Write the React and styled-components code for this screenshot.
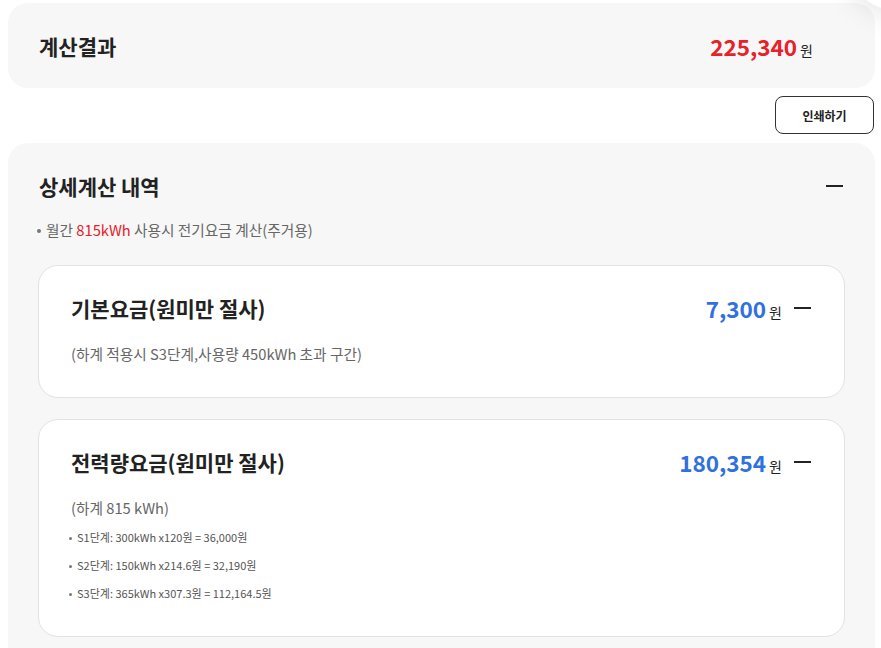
import React from 'react';
import styled, { createGlobalStyle } from 'styled-components';

const GlobalStyle = createGlobalStyle`
  body {
    margin: 0;
    background: #fff;
    font-family: "Noto Sans CJK KR", "Noto Sans", sans-serif;
    color: #222;
  }
`;

const Page = styled.div`
  padding: 3px 6px 0 8px;
  position: relative;
  overflow: hidden;
  height: 648px;
  box-sizing: border-box;
`;

const CornerShade = styled.div`
  position: absolute;
  top: -70px;
  right: -60px;
  width: 90px;
  height: 80px;
  border-radius: 50%;
  box-shadow: 0 0 32px rgba(0, 0, 0, 0.14);
`;

const ResultCard = styled.section`
  height: 85px;
  background: #f7f7f7;
  border-radius: 20px;
  display: flex;
  align-items: center;
  justify-content: space-between;
  padding: 0 62px 0 31px;
`;

const BigTitle = styled.h2`
  margin: 0;
  font-size: 21px;
  font-weight: 700;
  line-height: 30px;
  color: #222;
`;

const Amount = styled.div`
  display: flex;
  align-items: baseline;
  gap: 3px;
`;

const Number = styled.span`
  font-size: 22.5px;
  font-weight: 700;
  color: ${p => (p.tone === 'red' ? '#e8202a' : '#3070e0')};
`;

const Unit = styled.span`
  font-size: 14px;
  color: #222;
`;

const ButtonRow = styled.div`
  display: flex;
  justify-content: flex-end;
  padding: 8px 1px 9px 0;
`;

const PrintButton = styled.button`
  width: 99px;
  height: 38px;
  border: 1px solid #333;
  border-radius: 8px;
  background: #fff;
  font-family: inherit;
  font-size: 12px;
  font-weight: 700;
  color: #222;
`;

const DetailCard = styled.section`
  background: #f7f7f7;
  border-radius: 20px;
  padding: 28px 30px 30px;
`;

const HeaderRow = styled.div`
  display: flex;
  align-items: center;
  justify-content: space-between;
  height: 30px;
  padding: ${p => (p.inner ? '0' : '0 2px 0 1px')};
`;

const Minus = styled.span`
  display: block;
  width: 17px;
  height: 2px;
  background: #222;
`;

const Right = styled.div`
  display: flex;
  align-items: center;
  gap: 12px;
`;

const Dot = styled.span`
  display: inline-block;
  width: ${p => p.size}px;
  height: ${p => p.size}px;
  border-radius: 50%;
  background: #777;
  vertical-align: middle;
  margin: 0 ${p => p.gap}px 2px ${p => p.shift}px;
`;

const Intro = styled.p`
  margin: 19px 0 0;
  font-size: 14.7px;
  line-height: 20px;
  color: #666;
`;

const Red = styled.span`
  color: #e8202a;
`;

const Cards = styled.div`
  margin-top: 25px;
  display: flex;
  flex-direction: column;
  gap: 21px;
`;

const FeeCard = styled.div`
  background: #fff;
  border: 1px solid #e1e1ea;
  border-radius: 20px;
  padding: 27px 33px 33px 32px;
`;

const Desc = styled.p`
  margin: 21px 0 0;
  font-size: 14.7px;
  line-height: 20px;
  color: #666;
`;

const Steps = styled.ul`
  margin: 5px 0 -4px;
  padding: 0;
  list-style: none;
`;

const Step = styled.li`
  font-size: 11px;
  line-height: 28px;
  color: #555;
`;

const fees = [
  {
    title: '기본요금(원미만 절사)',
    amount: '7,300',
    desc: '(하계 적용시 S3단계,사용량 450kWh 초과 구간)',
    steps: [],
  },
  {
    title: '전력량요금(원미만 절사)',
    amount: '180,354',
    desc: '(하계 815 kWh)',
    steps: [
      'S1단계: 300kWh x120원 = 36,000원',
      'S2단계: 150kWh x214.6원 = 32,190원',
      'S3단계: 365kWh x307.3원 = 112,164.5원',
    ],
  },
];

export default function App() {
  return (
    <Page>
      <GlobalStyle />
      <CornerShade />
      <ResultCard>
        <BigTitle>계산결과</BigTitle>
        <Amount>
          <Number tone="red">225,340</Number>
          <Unit>원</Unit>
        </Amount>
      </ResultCard>
      <ButtonRow>
        <PrintButton>인쇄하기</PrintButton>
      </ButtonRow>
      <DetailCard>
        <HeaderRow>
          <BigTitle>상세계산 내역</BigTitle>
          <Minus />
        </HeaderRow>
        <Intro>
          <Dot size={4} gap={5} shift={-1} />
          월간 <Red>815kWh</Red> 사용시 전기요금 계산(주거용)
        </Intro>
        <Cards>
          {fees.map(fee => (
            <FeeCard key={fee.title}>
              <HeaderRow inner>
                <BigTitle>{fee.title}</BigTitle>
                <Right>
                  <Amount>
                    <Number>{fee.amount}</Number>
                    <Unit>원</Unit>
                  </Amount>
                  <Minus />
                </Right>
              </HeaderRow>
              <Desc>{fee.desc}</Desc>
              {fee.steps.length > 0 && (
                <Steps>
                  {fee.steps.map(s => (
                    <Step key={s}>
                      <Dot size={3} gap={5} shift={-2} />
                      {s}
                    </Step>
                  ))}
                </Steps>
              )}
            </FeeCard>
          ))}
        </Cards>
      </DetailCard>
    </Page>
  );
}
